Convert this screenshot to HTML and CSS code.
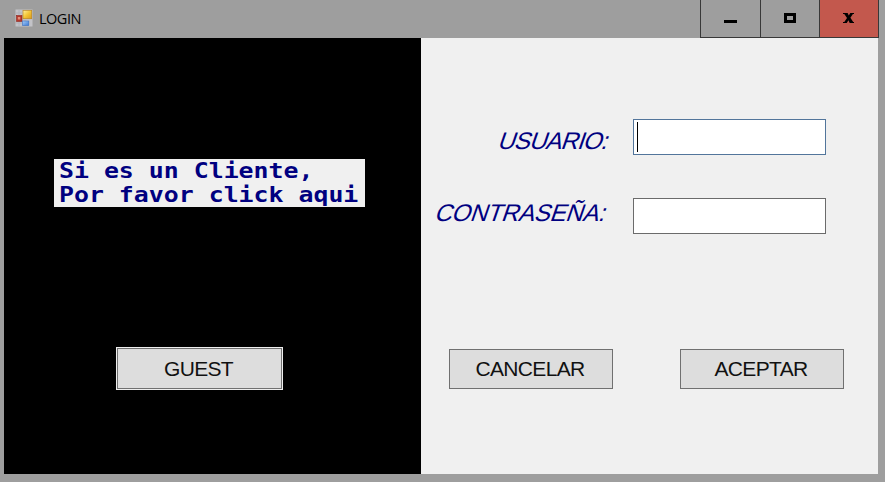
FILE: index.html
```html
<!DOCTYPE html>
<html lang="es">
<head>
<meta charset="utf-8">
<title>LOGIN</title>
<link rel="stylesheet" href="styles.css">
</head>
<body>
<div class="window">
  <header class="titlebar">
    <svg class="app-icon" width="18" height="18" viewBox="0 0 18 18">
      <defs>
        <linearGradient id="gold" x1="0" y1="0" x2="1" y2="1"><stop offset="0" stop-color="#fff3a0"/><stop offset=".5" stop-color="#f3c535"/><stop offset="1" stop-color="#d99a1c"/></linearGradient>
        <linearGradient id="blue" x1="0" y1="0" x2="1" y2="1"><stop offset="0" stop-color="#a6cdf8"/><stop offset="1" stop-color="#3a78d4"/></linearGradient>
      </defs>
      <rect x=".5" y=".5" width="17" height="17" fill="#c3c3c8"/>
      <path d="M1 4h6M1 14h6M4 1v16M10 11v6" stroke="#aeb2bb" fill="none"/>
      <rect x="1.500" y="6.5" width="5.500" height="6" fill="#b5362a" stroke="#8c2820" stroke-width=".6"/>
      <rect x="2.8" y="8" width="2.5" height="2.5" fill="#e58d78"/>
      <rect x="8" y="1.3" width="8.7" height="8.4" fill="url(#gold)" stroke="#bd8620" stroke-width=".7"/>
      <rect x="7.5" y="12" width="6.3" height="4.5" fill="url(#blue)" stroke="#3a6fc0" stroke-width=".6"/>
    </svg>
    <span class="title">LOGIN</span>
    <div class="controls">
      <div class="control minimize"><svg width="13" height="3"><rect width="13" height="3"/></svg></div>
      <div class="control maximize"><svg width="12" height="10"><path d="M1.5 1.5h9v7h-9z" fill="none" stroke="#000" stroke-width="3"/></svg></div>
      <div class="control close"><svg width="12" height="10" viewBox="0 0 12 10"><path d="M0 0h4.600L5.800 2.600 7.300 0H11v1H9.900L7.400 4.700 10.200 9H11v1H6.700L5.400 7.200 3.800 10H0V9h1.300L4 5 1.300 1H0z"/></svg></div>
    </div>
  </header>
  <main class="content">
    <section class="guest">
      <p class="notice"><span class="notice-text">Si es un Cliente,<br>Por favor click aqui</span></p>
      <div class="default"><button class="button">GUEST</button></div>
    </section>
    <form class="login">
      <div class="row first"><span class="label">USUARIO:</span><div class="input focused"><i class="caret"></i></div></div>
      <div class="row second"><span class="label">CONTRASEÑA:</span><div class="input"></div></div>
      <div class="actions">
        <button class="button" type="button">CANCELAR</button>
        <button class="button" type="button">ACEPTAR</button>
      </div>
    </form>
  </main>
</div>
</body>
</html>
```
FILE: styles.css
```css
* { box-sizing: border-box; }
body { margin: 0; background: #9e9e9e; font-family: "Liberation Sans", Arial, sans-serif; }
.window { width: 885px; height: 482px; padding: 0 7px 8px 4px; display: flex; flex-direction: column; overflow: hidden; }
.titlebar { height: 38px; display: flex; align-items: flex-start; flex: none; margin-right: -1px; }
.app-icon { margin: 9px 0 0 11px; }
.title { margin: 8px 0 0 6px; font: 14.5px/21px "Open Sans", sans-serif; letter-spacing: -.5px; color: #000; }
.controls { display: flex; margin-left: auto; height: 38px; border: 1px solid #383838; border-top: 0; }
.control { display: flex; justify-content: center; padding-top: 13px; }
.control + .control { border-left: 1px solid #383838; }
.minimize { width: 59px; padding-top: 20px; }
.maximize { width: 59px; }
.close { width: 59px; background: #c3584d; }
.content { flex: 1; display: flex; background: #f0f0f0; }
.guest { width: 417px; background: #000; display: flex; flex-direction: column; align-items: flex-start; }
.notice { margin: 121px 0 0 50px; width: 311px; height: 48px; background: #f0f0f0; overflow: hidden; }
.notice-text { display: block; margin: 0 0 0 4.5px; font: bold 22px/24px "DejaVu Sans Mono", monospace; color: #000080; white-space: nowrap; transform: scaleX(1.13); transform-origin: 0 0; }
.button { display: block; width: 164px; height: 40px; padding: 0 2px 0 0; border: 1px solid #707070; border-radius: 0; background: #ddd; font: 21px/38px "Liberation Sans", Arial, sans-serif; letter-spacing: -.65px; color: #111; }
.default { width: 167px; height: 43px; margin: 140px 0 0 112px; padding: 1px; background: #eee; }
.default .button { width: 165px; height: 41px; }
.login { flex: 1; }
.row { display: flex; height: 36px; padding-right: 52px; justify-content: flex-end; }
.first { margin-top: 81px; }
.second { margin-top: 43px; }
.label { font-size: 24px; line-height: 36px; color: #000080; transform: skewX(-19deg); white-space: nowrap; margin-right: 26.5px; letter-spacing: -.3px; }
.first .label { padding-top: 4px; margin-right: 23px; letter-spacing: -.9px; }
.second .label { margin-top: -3px; }
.input { width: 193px; height: 36px; padding: 2px 3px; border: 1px solid #6b6b6b; background: #fff; }
.focused { border-color: #52759b; }
.caret { display: block; width: 1px; height: 30px; background: #000; }
.actions { display: flex; gap: 67px; margin: 115px 0 0 28px; }
```
